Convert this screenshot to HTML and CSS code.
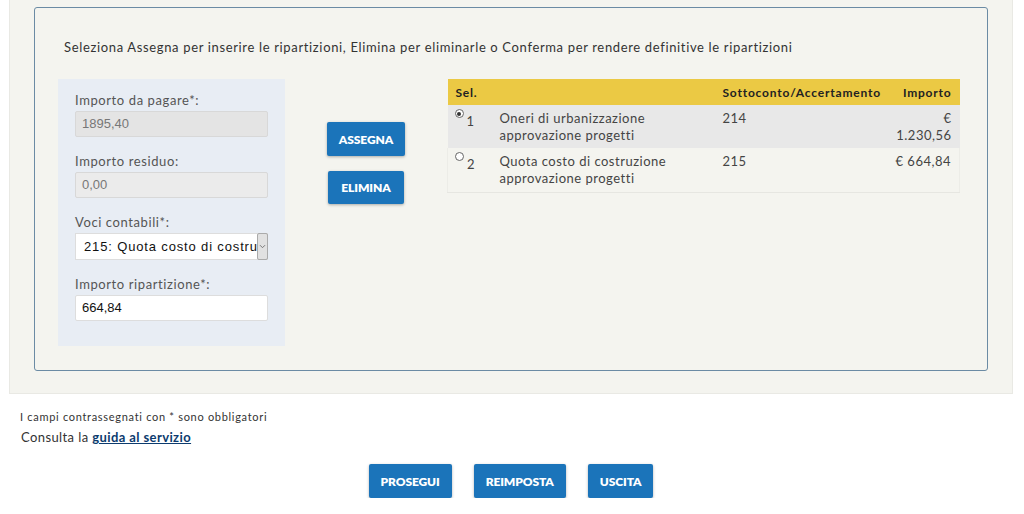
FILE: index.html
```html
<!DOCTYPE html>
<html lang="it">
<head>
<meta charset="utf-8">
<title>Ripartizioni</title>
<link rel="stylesheet" href="styles.css">
</head>
<body>
<div class="panel">
  <div class="box">
    <p class="intro">Seleziona Assegna per inserire le ripartizioni, Elimina per eliminarle o Conferma per rendere definitive le ripartizioni</p>
    <div class="row">
      <div class="form">
        <div class="field">
          <label class="lbl">Importo da pagare*:</label>
          <div class="inp disabled">1895,40</div>
        </div>
        <div class="field">
          <label class="lbl">Importo residuo:</label>
          <div class="inp disabled light">0,00</div>
        </div>
        <div class="field">
          <label class="lbl">Voci contabili*:</label>
          <div class="sel"><span class="sel-text">215: Quota costo di costru</span><span class="sel-btn"><svg width="7" height="5" viewBox="0 0 7 5"><path d="M1 1.2 L3.5 3.7 L6 1.2" fill="none" stroke="#777" stroke-width="1"/></svg></span></div>
        </div>
        <div class="field">
          <label class="lbl">Importo ripartizione*:</label>
          <div class="inp white">664,84</div>
        </div>
      </div>
      <div class="actions">
        <button class="btn">ASSEGNA</button>
        <button class="btn">ELIMINA</button>
      </div>
      <table class="tbl">
        <colgroup><col class="c1"><col class="c2"><col class="c3"><col class="c4"></colgroup>
        <thead>
          <tr><th>Sel.</th><th></th><th>Sottoconto/Accertamento</th><th class="r">Importo</th></tr>
        </thead>
        <tbody>
          <tr class="odd"><td><span class="radio on"></span><span class="num">1</span></td><td>Oneri di urbanizzazione approvazione progetti</td><td>214</td><td class="r">€ 1.230,56</td></tr>
          <tr class="even"><td><span class="radio"></span><span class="num">2</span></td><td>Quota costo di costruzione approvazione progetti</td><td>215</td><td class="r">€ 664,84</td></tr>
        </tbody>
      </table>
    </div>
  </div>
</div>
<p class="note">I campi contrassegnati con * sono obbligatori</p>
<p class="guide">Consulta la <a href="#">guida al servizio</a></p>
<div class="bottom">
  <button class="btn">PROSEGUI</button>
  <button class="btn">REIMPOSTA</button>
  <button class="btn">USCITA</button>
</div>
</body>
</html>
```
FILE: styles.css
```css
* { box-sizing: border-box; }
body {
  margin: 0;
  background: #fff;
  font-family: Lato, "Open Sans", sans-serif;
  color: #333;
}
.panel {
  margin: 0 11px 0 9px;
  padding: 7px 24px 22px;
  background: #f4f4ef;
  border: 1px solid #e9e9e4;
  border-top: none;
}
.box {
  border: 1px solid #6b8ba4;
  border-radius: 3px;
  padding: 30px 27px 24px 23px;
}
.intro {
  margin: 0 0 23px 6px;
  font-size: 13px;
  line-height: 18px;
  letter-spacing: 0.65px;
  color: #333;
}
.row {
  display: flex;
  align-items: flex-start;
}
.form {
  width: 227px;
  background: #e8edf4;
  padding: 12px 17px 25px;
}
.field + .field { margin-top: 15px; }
.lbl {
  display: block;
  font-size: 13px;
  line-height: 18px;
  letter-spacing: 0.6px;
  color: #555;
  margin-bottom: 2px;
}
.inp {
  height: 26px;
  border: 1px solid #ddd;
  border-radius: 2px;
  padding: 0 6px;
  font-family: "Liberation Sans", Arial, sans-serif;
  font-size: 13px;
  line-height: 24px;
  color: #222;
}
.inp.disabled { background: #e4e4e4; color: #777; border-color: #d8d8d8; }
.inp.light { background: #ebebeb; }
.inp.white { background: #fff; color: #111; }
.sel {
  display: flex;
  height: 27px;
  background: #fff;
  border: 1px solid #ddd;
}
.sel-text {
  flex: 1;
  padding-left: 8px;
  font-family: "Liberation Sans", Arial, sans-serif;
  font-size: 13px;
  line-height: 25px;
  letter-spacing: 0.85px;
  color: #111;
  white-space: nowrap;
  overflow: hidden;
}
.sel-btn {
  width: 11px;
  background: #e1e1e1;
  border: 1px solid #aaa;
  border-radius: 2px;
  margin: -1px -1px -1px 0;
  display: flex;
  align-items: center;
  justify-content: center;
}
.actions {
  width: 164px;
  display: flex;
  flex-direction: column;
  align-items: center;
  gap: 15px;
  padding-top: 43px;
}
.btn {
  height: 34px;
  padding: 0 12px;
  border: none;
  border-radius: 2px;
  background: #1b74ba;
  color: #fff;
  font-family: Lato, "Open Sans", sans-serif;
  font-weight: 800;
  font-size: 12px;
  letter-spacing: -0.1px;
  box-shadow: 0 1px 3px rgba(0,0,0,0.3);
}
.actions .btn:last-child { height: 33px; padding: 0 13px; }
.tbl {
  width: 512px;
  table-layout: fixed;
  border-collapse: collapse;
  font-size: 13px;
  letter-spacing: 0.5px;
  color: #444;
}
.c1 { width: 44px; }
.c2 { width: 223px; }
.c3 { width: 166px; }
.c4 { width: 79px; }
.tbl th {
  background: #ebc944;
  height: 26px;
  padding: 0 8px;
  text-align: left;
  font-size: 12px;
  font-weight: 700;
  letter-spacing: 0.8px;
  color: #222;
}
.tbl td {
  padding: 5px 8px 4px;
  line-height: 17px;
  vertical-align: top;
}
.tbl .r { text-align: right; }
.tbl tr.odd td { background: #e8e8e8; height: 43px; }
.tbl tr.even td { background: #f4f4ef; height: 44px; border-bottom: 1px solid #e6e6e1; }
.tbl tr.even td:first-child { border-left: 1px solid #ecece7; }
.tbl tr.even td:last-child { border-right: 1px solid #ecece7; }
.radio {
  display: inline-block;
  width: 9px;
  height: 9px;
  border: 1px solid #666;
  border-radius: 50%;
  background: #fff;
  vertical-align: top;
  margin: -1px 3px 0 -1px;
  position: relative;
}
.radio.on::after {
  content: "";
  position: absolute;
  left: 1.5px;
  top: 1.5px;
  width: 4px;
  height: 4px;
  border-radius: 50%;
  background: #333;
}
.num { display: inline-block; margin-top: 3px; }
.note {
  margin: 15px 0 0 20px;
  font-size: 11px;
  line-height: 16px;
  letter-spacing: 0.7px;
  color: #333;
}
.guide {
  margin: 3px 0 0 21px;
  font-size: 13px;
  line-height: 18px;
  letter-spacing: 0.4px;
  color: #333;
}
.guide a { color: #0c3b6e; font-weight: 700; }
.bottom {
  display: flex;
  justify-content: center;
  gap: 22px;
  margin-top: 18px;
  padding-right: 2px;
}
```
